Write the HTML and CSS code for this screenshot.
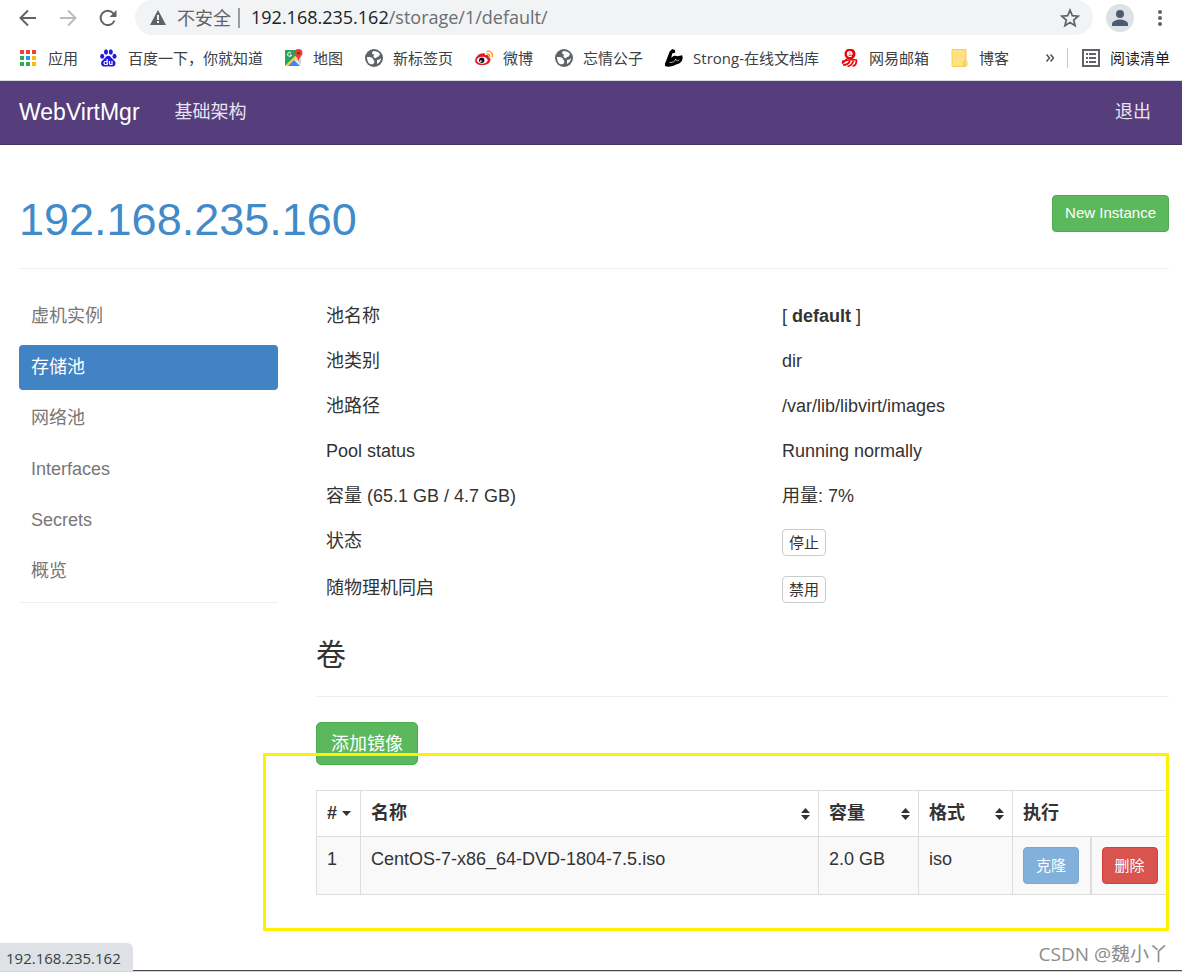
FILE: index.html
```html
<!DOCTYPE html>
<html lang="zh-CN">
<head>
    <meta charset="UTF-8">
    <meta name="viewport" content="width=device-width, initial-scale=1">
    <title>WebVirtMgr - default</title>
    <link rel="stylesheet" href="styles.css">
</head>
<body>
    <div class="browser">
        <div class="toolbar">
            <button class="tool" aria-label="后退">
                <svg width="18" height="18" viewBox="0 0 18 18" fill="none" stroke="#5f6368" stroke-width="2"><path d="M17 9H2M9 1.500L1.500 9L9 16.500"/></svg>
            </button>
            <button class="tool" aria-label="前进">
                <svg width="18" height="18" viewBox="0 0 18 18" fill="none" stroke="#babcbe" stroke-width="2"><path d="M1 9h15M9 1.500L16.500 9L9 16.500"/></svg>
            </button>
            <button class="tool" aria-label="刷新">
                <svg width="18" height="18" viewBox="0 0 18 18"><path d="M15.500 11.500A7.200 7.200 0 1 1 14.500 4.500" fill="none" stroke="#5f6368" stroke-width="2"/><path d="M17.500 1v7H10.500z" fill="#5f6368"/></svg>
            </button>
            <div class="address">
                <svg width="16" height="15" viewBox="0 0 16 15"><path d="M8 0l8 15H0z" fill="#5f6368"/><path d="M7 5h2v5H7zM7 11h2v2H7z" fill="#f1f3f4"/></svg>
                <span class="insecure">不安全</span>
                <label class="host" for="url">192.168.235.162</label>
                <input class="url" id="url" type="text" value="/storage/1/default/">
                <button class="tool" aria-label="收藏">
                    <svg width="20" height="20" viewBox="0 0 20 20"><path d="M10 2.200l2.300 5.400 5.900.5-4.500 3.900 1.400 5.700-5.100-3.100-5.100 3.100 1.400-5.700L1.800 8.100l5.900-.5z" fill="none" stroke="#5f6368" stroke-width="1.700"/></svg>
                </button>
            </div>
            <button class="profile" aria-label="用户">
                <svg width="28" height="28" viewBox="0 0 28 28"><circle cx="14" cy="14" r="14" fill="#dee1e6"/><circle cx="14" cy="10" r="4" fill="#4d5b70"/><path d="M6 22v-2c0-3 5-4.500 8-4.500s8 1.500 8 4.500v2z" fill="#4d5b70"/></svg>
            </button>
            <button class="tool" aria-label="菜单">
                <svg width="4" height="18" viewBox="0 0 4 18" fill="#5f6368"><circle cx="2" cy="3" r="2"/><circle cx="2" cy="9" r="2"/><circle cx="2" cy="15" r="2"/></svg>
            </button>
        </div>
        <div class="bookmarks">
            <a class="bookmark" href="#">
                <svg width="18" height="18" viewBox="0 0 18 18"><path d="M0 1h4v4H0zM6 1h4v4H6zM12 1h4v4h-4z" fill="#ea4335"/><path d="M0 7h4v4H0zM0 13h4v4H0z" fill="#34a853"/><path d="M6 7h4v4H6z" fill="#2196f3"/><path d="M6 13h4v4H6z" fill="#34a853"/><path d="M12 7h4v4h-4zM12 13h4v4h-4z" fill="#fbbc05"/></svg>
                应用
            </a>
            <a class="bookmark" href="#">
                <svg width="18" height="18" viewBox="0 0 18 18"><g fill="#2319dc"><ellipse cx="2.200" cy="7.300" rx="2" ry="2.500"/><ellipse cx="6" cy="3" rx="2" ry="2.700"/><ellipse cx="10.800" cy="3" rx="2" ry="2.700"/><ellipse cx="14.500" cy="7.300" rx="2" ry="2.500"/><path d="M8.300 6.700c2 0 2.700 1.700 4 3.100 1.700 1.700 3.700 2.800 3.200 5.200-.5 2.800-3.200 2.800-7.200 2.300-4 .5-6.700.5-7.200-2.300-.5-2.400 1.500-3.500 3.200-5.200 1.300-1.400 2-3.100 4-3.100z"/></g><path d="M7.200 10v5.500H5.500a1.500 1.500 0 0 1 0-3h1.700M9.500 12v2.500q0 1 1 1H12V12" fill="none" stroke="#fff" stroke-width="1.200"/></svg>
                百度一下，你就知道
            </a>
            <a class="bookmark" href="#">
                <svg width="18" height="18" viewBox="0 0 18 18"><path d="M0 1h16v16H0z" fill="#f1f1f1"/><path d="M0 1h12v5L0 17z" fill="#2aa45a"/><path d="M0 17L11 6l2 2L3 17z" fill="#fbcf3b"/><path d="M3 17l6-6 6 6z" fill="#4286f5"/><path d="M10 10l6 6V8z" fill="#d5d5d5"/><path d="M6 4A2 2 0 1 0 6.500 6H4.500" fill="none" stroke="#fff"/><path d="M13.500 0a4 4 0 0 1 4 4c0 3-3 3.500-4 8.500-1-5-4-5.500-4-8.500a4 4 0 0 1 4-4z" fill="#e74335"/><circle cx="13.500" cy="4" r="1.500" fill="#8c2a22"/></svg>
                地图
            </a>
            <a class="bookmark" href="#">
                <svg width="18" height="18" viewBox="0 0 18 18"><circle cx="9" cy="9" r="9" fill="#5f6368"/><path d="M2 8c3 0 5 0 6 2s2 2 1 4-3 1-4 1-3-3-3-7zM8 2c3 0 6 1 7 3-1 2-1 3-3 3-1 0 0 2-2 1S8 7 9 6s-2 0-2-2zM12 11c2 0 3-1 4-2 0 3-2 5-4 6z" fill="#fff"/></svg>
                新标签页
            </a>
            <a class="bookmark" href="#">
                <svg width="18" height="16" viewBox="0 0 20 18"><path d="M8 4c2-1 4 0 3 2 3-1 5 0 4 2 2 1 3 2 2 4-1 4-6 5-9 5-4 0-8-2-8-5 0-4 5-9 8-8z" fill="#e6162d"/><ellipse cx="8" cy="11.500" rx="6" ry="4" fill="#fff"/><circle cx="7.500" cy="11.500" r="3" fill="#111"/><circle cx="6.500" cy="12.500" r="1" fill="#fff"/><path d="M13 4.500c2-.5 4 1 3.300 3.500M13 1.500c4-1 7.500 2 6.200 6.500" fill="none" stroke="#f90" stroke-width="1.500"/></svg>
                微博
            </a>
            <a class="bookmark" href="#">
                <svg width="18" height="18" viewBox="0 0 18 18"><circle cx="9" cy="9" r="9" fill="#5f6368"/><path d="M2 8c3 0 5 0 6 2s2 2 1 4-3 1-4 1-3-3-3-7zM8 2c3 0 6 1 7 3-1 2-1 3-3 3-1 0 0 2-2 1S8 7 9 6s-2 0-2-2zM12 11c2 0 3-1 4-2 0 3-2 5-4 6z" fill="#fff"/></svg>
                忘情公子
            </a>
            <a class="bookmark" href="#">
                <svg width="18" height="18" viewBox="0 0 20 20"><path d="M5 3L8 0l3 1 .5 3L8 5l-1 5c2-3 5-3 7-2l5-1c2 4-1 9-6 10-4 2-9 4-13 2-1-2 1-5 2-8z" fill="#000"/><path d="M5 15c4 0 6-1 7-4 0 2 2 3 4 1" fill="none" stroke="#fff" stroke-width=".8"/></svg>
                Strong-在线文档库
            </a>
            <a class="bookmark" href="#">
                <svg width="18" height="18" viewBox="0 0 18 18"><circle cx="9" cy="5" r="5.500" fill="#f00000"/><path d="M6.500 5h4.500c0-3-4.500-3-4.500 0 0 3 3 2.800 4.300 1.800" fill="none" stroke="#fff" stroke-width="1.300"/><path d="M1 12.500c4-1.500 10-2 15-1.500M6 10L1 14.500M15.500 11c0 4-1 6-4 6M9 12c-1 2-3 4-7 4M12.500 12c-1 2.500-3 5-6 5.500" fill="none" stroke="#f00000" stroke-width="1.700"/></svg>
                网易邮箱
            </a>
            <a class="bookmark" href="#">
                <svg width="18" height="18" viewBox="0 0 18 18"><path d="M1 .5h14v11l1 1v4l-2 1H1z" fill="#ffe083" stroke="#f6d155"/><path d="M13 17v-4l2-2" fill="none" stroke="#e8bd3c"/></svg>
                博客
            </a>
            <button class="more" aria-label="更多书签">
                <svg width="8" height="8" viewBox="0 0 8 8" fill="none" stroke="#4a4d51" stroke-width="1.500"><path d="M.5 .5L3.500 4L.5 7.500M4.500 .5L7.500 4L4.500 7.500"/></svg>
            </button>
            <a class="bookmark reading" href="#">
                <svg width="18" height="18" viewBox="0 0 18 18"><path d="M1 1h16v16H1z" fill="none" stroke="#5f6368" stroke-width="2"/><path d="M4 4h2v2H4zM7 4h7v2H7zM4 8h2v2H4zM7 8h7v2H7zM4 12h2v2H4zM7 12h7v2H7z" fill="#5f6368"/></svg>
                阅读清单
            </a>
        </div>
    </div>

    <nav class="navbar">
        <a class="brand" href="#">WebVirtMgr</a>
        <a class="nav-link" href="#">基础架构</a>
        <a class="nav-link logout" href="#">退出</a>
    </nav>

    <div class="container">
        <header class="page-header">
            <h1><a href="#">192.168.235.160</a></h1>
            <button class="btn btn-success">New Instance</button>
        </header>

        <div class="row">
            <aside>
                <ul class="sidebar">
                    <li><a href="#">虚机实例</a></li>
                    <li><a class="active" href="#">存储池</a></li>
                    <li><a href="#">网络池</a></li>
                    <li><a href="#">Interfaces</a></li>
                    <li><a href="#">Secrets</a></li>
                    <li><a href="#">概览</a></li>
                </ul>
            </aside>

            <main>
                <table class="info">
                    <tr><td>池名称</td><td>[ <strong>default</strong> ]</td></tr>
                    <tr><td>池类别</td><td>dir</td></tr>
                    <tr><td>池路径</td><td>/var/lib/libvirt/images</td></tr>
                    <tr><td>Pool status</td><td>Running normally</td></tr>
                    <tr><td>容量 (65.1 GB / 4.7 GB)</td><td>用量: 7%</td></tr>
                    <tr><td>状态</td><td><button class="btn btn-xs">停止</button></td></tr>
                    <tr><td>随物理机同启</td><td><button class="btn btn-xs">禁用</button></td></tr>
                </table>

                <h3>卷</h3>

                <div class="volumes">
                    <button class="btn btn-success btn-lg">添加镜像</button>
                    <table class="volume-table">
                        <colgroup>
                            <col class="col-num">
                            <col>
                            <col class="col-size">
                            <col class="col-format">
                            <col class="col-action">
                            <col class="col-action">
                        </colgroup>
                        <thead>
                            <tr>
                                <th><div class="sort sort-desc"># <svg width="9" height="5" viewBox="0 0 9 5"><path d="M0 0h9L4.500 5z" fill="#333"/></svg></div></th>
                                <th><div class="sort">名称 <svg width="9" height="12" viewBox="0 0 9 12"><path d="M4.500 0L9 5H0zM0 7h9l-4.500 5z" fill="#333"/></svg></div></th>
                                <th><div class="sort">容量 <svg width="9" height="12" viewBox="0 0 9 12"><path d="M4.500 0L9 5H0zM0 7h9l-4.500 5z" fill="#333"/></svg></div></th>
                                <th><div class="sort">格式 <svg width="9" height="12" viewBox="0 0 9 12"><path d="M4.500 0L9 5H0zM0 7h9l-4.500 5z" fill="#333"/></svg></div></th>
                                <th colspan="2">执行</th>
                            </tr>
                        </thead>
                        <tbody>
                            <tr>
                                <td>1</td>
                                <td>CentOS-7-x86_64-DVD-1804-7.5.iso</td>
                                <td>2.0 GB</td>
                                <td>iso</td>
                                <td><button class="btn btn-primary" disabled>克隆</button></td>
                                <td class="delete"><button class="btn btn-danger">删除</button></td>
                            </tr>
                        </tbody>
                    </table>
                    <div class="highlight"></div>
                </div>
            </main>
        </div>
    </div>

    <div class="status">192.168.235.162</div>
    <div class="watermark">CSDN @魏小丫</div>
</body>
</html>
```

FILE: styles.css
```css
* {
    box-sizing: border-box;
}
body {
    margin: 0;
    min-height: 100vh;
    position: relative;
    border-bottom: 1px solid #d5d5d5;
    box-shadow: inset 0 -1px #4a474f;
    font-family: "Liberation Sans", "Noto Sans CJK SC", sans-serif;
    font-size: 18px;
    line-height: 25px;
    color: #333;
    background-color: #fff;
}
a {
    color: inherit;
    text-decoration: none;
}
button {
    font-family: inherit;
    cursor: pointer;
}
svg {
    display: block;
    flex: none;
}

/* browser bars */
.browser {
    font-family: "Open Sans", "Noto Sans CJK SC", sans-serif;
    border-bottom: 1px solid #dadce0;
}
.toolbar {
    display: flex;
    align-items: center;
    height: 35px;
    padding: 0 20px 0 19px;
}
.tool,
.profile,
.more {
    display: flex;
    padding: 0;
    border: none;
    background: none;
}
.toolbar > .tool {
    margin-right: 22px;
}
.toolbar > .tool:last-child {
    margin-right: 0;
}
.address {
    flex: 1;
    display: flex;
    align-items: center;
    height: 35px;
    margin-left: -4px;
    padding: 0 13px 0 15px;
    border-radius: 18px;
    background-color: #f1f3f4;
}
.insecure {
    margin: 0 11px;
    padding-right: 7px;
    border-right: 2px solid #9a9da1;
    line-height: 20px;
    color: #5f6368;
}
.host {
    color: #202124;
}
.url {
    flex: 1;
    min-width: 0;
    padding: 0;
    border: none;
    outline: none;
    background: none;
    font: inherit;
    color: #6b6e72;
}
.profile {
    margin: 0 24px 0 13px;
}
.bookmarks {
    display: flex;
    align-items: center;
    gap: 22px;
    height: 45px;
    padding: 0 12px 0 20px;
    font-size: 15px;
    line-height: 20px;
    color: #3c4043;
    white-space: nowrap;
}
.bookmark {
    display: flex;
    align-items: center;
    gap: 10px;
}
.more {
    margin-left: auto;
    margin-right: -9px;
}
.reading {
    padding-left: 14px;
    border-left: 1px solid #c8cacd;
    color: #202124;
}

/* site navbar */
.navbar {
    display: flex;
    align-items: center;
    height: 64px;
    padding: 0 31px 0 19px;
    border-bottom: 1px solid #463265;
    background-color: #563d7c;
    color: #e8e3f0;
}
.brand {
    margin-right: 35px;
    font-size: 23px;
    color: #fff;
}
.logout {
    margin-left: auto;
}

.container {
    padding: 50px 13px 0 19px;
}
.page-header {
    display: flex;
    justify-content: space-between;
    align-items: flex-start;
    padding-bottom: 23px;
    border-bottom: 1px solid #eee;
}
h1 {
    margin: 0;
    font-size: 45px;
    font-weight: normal;
    line-height: 50px;
    color: #428bca;
}
.row {
    display: grid;
    grid-template-columns: 259fr 853fr;
    gap: 38px;
    padding-top: 25px;
}
.sidebar {
    display: flex;
    flex-direction: column;
    gap: 6px;
    margin: 0;
    padding: 0 0 8px;
    border-bottom: 1px solid #eee;
    list-style: none;
    color: #777;
}
.sidebar a {
    display: block;
    padding: 10px 12px;
    border-radius: 4px;
}
.sidebar .active {
    background-color: #4183c4;
    color: #fff;
}

/* buttons */
.btn {
    height: 37px;
    padding: 0 12px 2px;
    border: 1px solid #ccc;
    border-radius: 4px;
    font-size: 15px;
    color: #fff;
}
.btn-success {
    border-color: #4cae4c;
    background-color: #5cb85c;
}
.btn-primary {
    border-color: #357ebd;
    background-color: #428bca;
    opacity: 0.65;
}
.btn-danger {
    border-color: #d43f3a;
    background-color: #d9534f;
}
.btn-lg {
    display: block;
    height: 43px;
    margin-bottom: 25px;
    padding: 0 14px 4px;
    border-radius: 5px;
    font-size: 18px;
}
.btn-xs {
    display: block;
    height: 27px;
    padding: 0 6px 2px;
    background-color: #fff;
    color: #333;
}

/* pool details */
table {
    width: 100%;
    table-layout: fixed;
    border-collapse: collapse;
}
td,
th {
    padding: 10px;
    text-align: left;
    vertical-align: top;
}
.info td:first-child {
    width: 456px;
}
h3 {
    margin: 24px 0 25px;
    padding-bottom: 23px;
    border-bottom: 1px solid #eee;
    font-size: 30px;
    font-weight: normal;
    line-height: 36px;
}

/* volumes */
.volumes {
    position: relative;
}
.volume-table td,
.volume-table th {
    border: 1px solid #ddd;
}
.volume-table .delete {
    border-left-width: 2px;
}
.volume-table tbody {
    background-color: #f9f9f9;
}
.volume-table .btn {
    display: block;
}
.col-num {
    width: 44px;
}
.col-size {
    width: 100px;
}
.col-format {
    width: 94px;
}
.col-action {
    width: 78px;
}
.sort {
    display: flex;
    align-items: center;
    justify-content: space-between;
    margin-right: -2px;
}
.sort-desc {
    justify-content: flex-start;
    gap: 5px;
    margin-right: -5px;
}
.highlight {
    position: absolute;
    top: 31px;
    right: 0;
    bottom: -36px;
    left: -53px;
    border: 3px solid #fff200;
    pointer-events: none;
}

.status {
    position: absolute;
    left: 0;
    bottom: 0;
    padding: 3px 12px 0 6px;
    border-top-right-radius: 6px;
    background-color: #dee1e6;
    font-family: "Open Sans", sans-serif;
    font-size: 15px;
    color: #3c4043;
}
.watermark {
    position: absolute;
    right: 14px;
    bottom: 4px;
    font-family: "Open Sans", "Noto Sans CJK SC", sans-serif;
    font-size: 19px;
    color: #8c8c8c;
}
```
